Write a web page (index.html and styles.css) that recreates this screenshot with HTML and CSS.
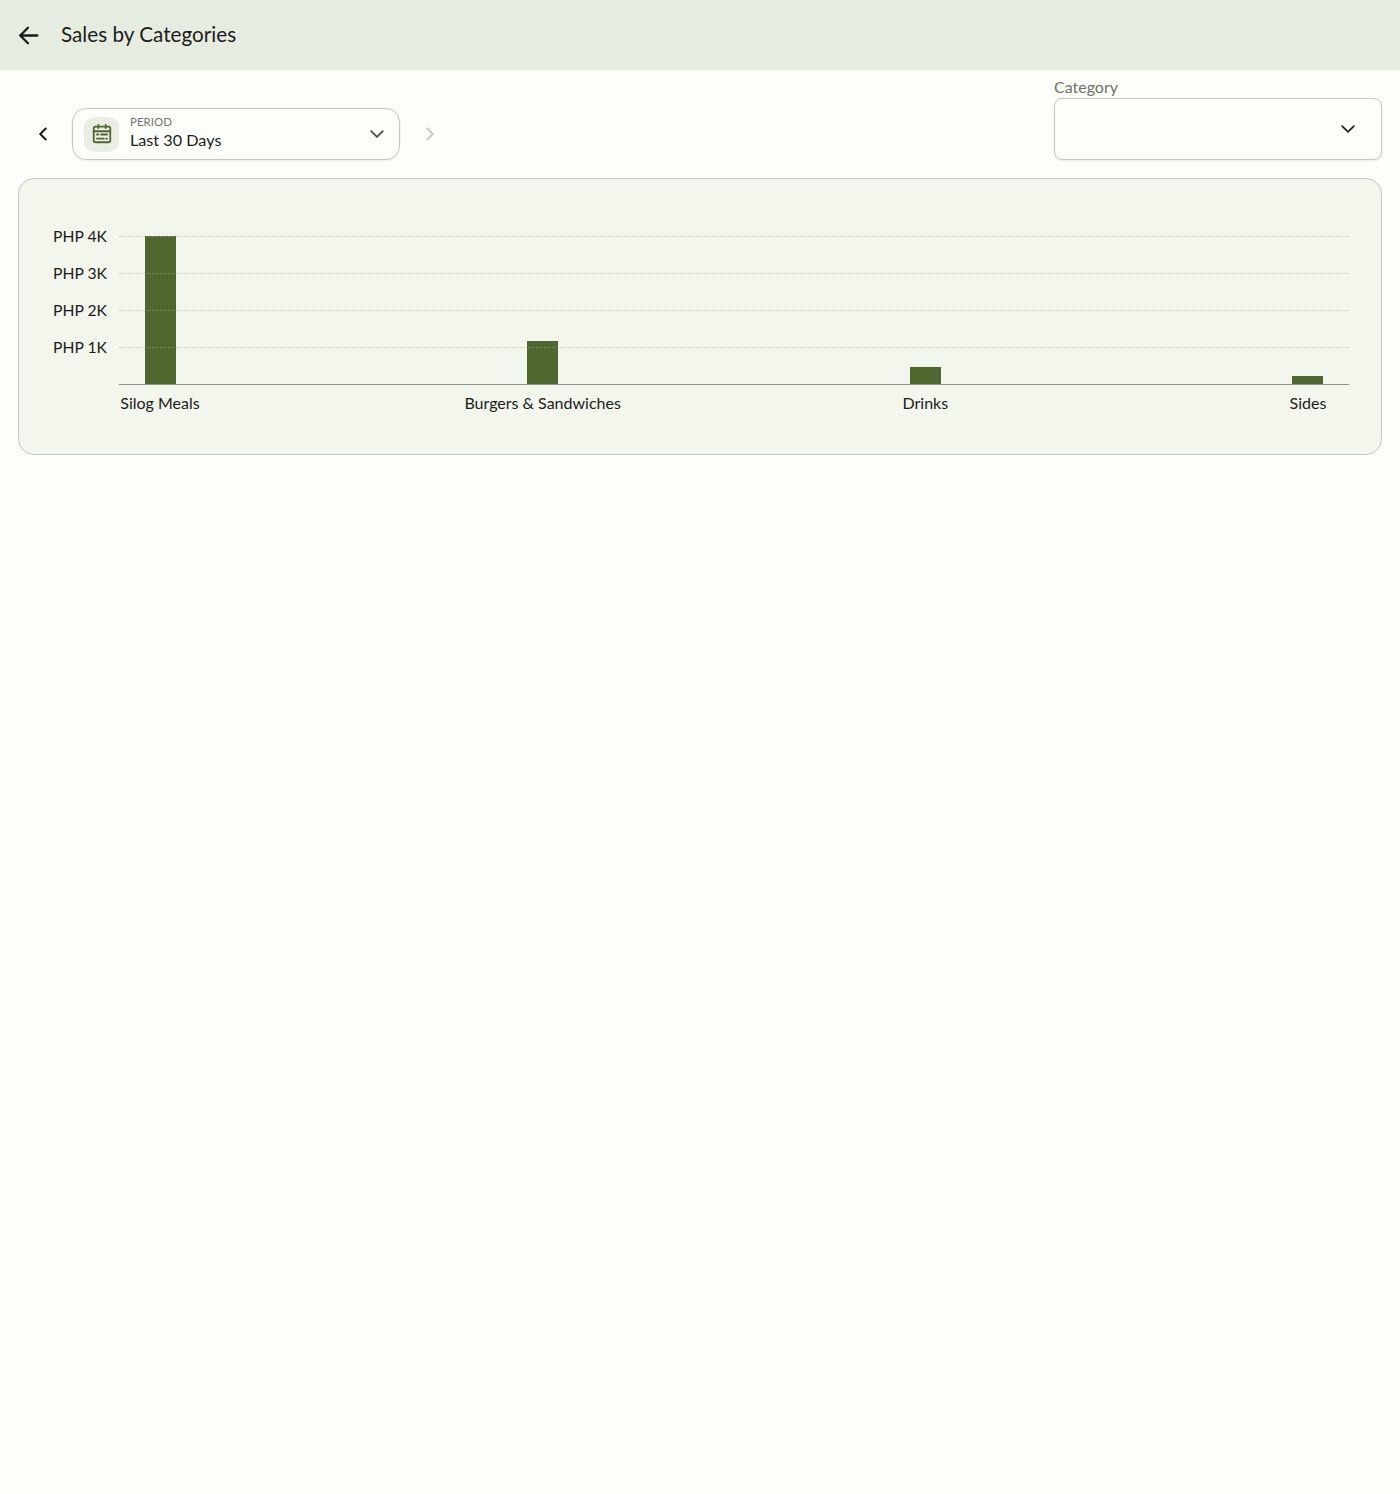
FILE: index.html
```html
<!DOCTYPE html>
<html lang="en">
<head>
    <meta charset="UTF-8">
    <meta name="viewport" content="width=device-width, initial-scale=1.0">
    <title>Sales by Categories</title>
    <link rel="stylesheet" href="styles.css">
</head>
<body>
    <header class="app-bar">
        <svg class="back-icon" viewBox="0 0 24 24"><path d="M20.500 12H4.500M11.500 4.500L4 12l7.500 7.500"/></svg>
        <h1>Sales by Categories</h1>
    </header>

    <div class="controls">
        <div class="period-group">
            <svg class="step-icon" viewBox="0 0 24 24"><path d="M15 6l-6 6 6 6"/></svg>
            <div class="period-select">
                <div class="period-icon">
                    <svg viewBox="0 0 24 24">
                        <rect x="3" y="4" width="18" height="17" rx="2"/>
                        <path d="M3 9h18M8 2v3.500M16 2v3.500M6.500 12.500h1.500M11 12.500h6.500M6.500 17h7.500M16.500 17h1"/>
                    </svg>
                </div>
                <div class="period-text">
                    <span class="period-label">PERIOD</span>
                    <span class="period-value">Last 30 Days</span>
                </div>
                <svg class="chevron muted" viewBox="0 0 24 24"><path d="M5 8.500l7 7 7-7"/></svg>
            </div>
            <svg class="step-icon disabled" viewBox="0 0 24 24"><path d="M9 6l6 6-6 6"/></svg>
        </div>
        <div class="category-field">
            <label>Category</label>
            <div class="category-select">
                <svg class="chevron" viewBox="0 0 24 24"><path d="M5 8.500l7 7 7-7"/></svg>
            </div>
        </div>
    </div>

    <section class="chart-card">
        <div class="chart">
            <div class="y-labels">
                <span>PHP 4K</span>
                <span>PHP 3K</span>
                <span>PHP 2K</span>
                <span>PHP 1K</span>
            </div>
            <div class="plot">
                <div class="bars">
                    <div class="bar-slot"><div class="bar" style="height: 148px"></div></div>
                    <div class="bar-slot"><div class="bar" style="height: 43px"></div></div>
                    <div class="bar-slot"><div class="bar" style="height: 17px"></div></div>
                    <div class="bar-slot"><div class="bar" style="height: 8px"></div></div>
                </div>
                <div class="grid-lines">
                    <div class="grid-line"></div>
                    <div class="grid-line"></div>
                    <div class="grid-line"></div>
                    <div class="grid-line"></div>
                </div>
            </div>
            <div class="x-labels">
                <span>Silog Meals</span>
                <span>Burgers &amp; Sandwiches</span>
                <span>Drinks</span>
                <span>Sides</span>
            </div>
        </div>
    </section>
</body>
</html>
```

FILE: styles.css
```css
body {
    font-family: "Lato", "Open Sans", sans-serif;
    margin: 0;
    min-height: 1494px;
    background-color: #fdfef9;
    color: #1c1d1a;
}
svg {
    fill: none;
    stroke: currentColor;
    stroke-linecap: round;
    stroke-linejoin: round;
    display: block;
}

.app-bar {
    height: 70px;
    display: flex;
    align-items: center;
    padding-left: 16px;
    background-color: #e6ecdf;
}
.app-bar h1 {
    margin: 0 0 2px 20px;
    font-size: 20.7px;
    font-weight: 400;
}
.back-icon {
    width: 25px;
    height: 25px;
    stroke-width: 2.2;
}

.controls {
    display: flex;
    justify-content: space-between;
    align-items: flex-end;
    padding: 8px 18px 0;
}
.period-group {
    display: flex;
    align-items: center;
}
.step-icon {
    width: 22px;
    height: 22px;
    margin: 0 18px 0 14px;
    stroke-width: 2.2;
}
.step-icon.disabled {
    margin: 0 0 0 19px;
    color: #c8cac3;
}
.period-select {
    width: 328px;
    height: 52px;
    box-sizing: border-box;
    display: flex;
    align-items: center;
    padding: 0 12px 0 11px;
    border: 1px solid #c5c7bf;
    border-radius: 14px;
    box-shadow: 0 1px 2px rgba(0, 0, 0, 0.08);
}
.period-icon {
    width: 35px;
    height: 35px;
    display: flex;
    align-items: center;
    justify-content: center;
    background-color: #e9ede4;
    border-radius: 10px;
    color: #4f672e;
}
.period-icon svg {
    width: 22px;
    height: 22px;
    stroke-width: 2;
}
.period-text {
    flex: 1;
    display: flex;
    flex-direction: column;
    margin-left: 11px;
    padding-bottom: 4px;
}
.period-label {
    font-size: 11.5px;
    line-height: 16px;
    color: #74766f;
}
.period-value {
    font-size: 16.2px;
    line-height: 20px;
}
.chevron {
    width: 20px;
    height: 20px;
    stroke-width: 2;
}
.chevron.muted {
    color: #44463f;
}

.category-field {
    width: 328px;
}
.category-field label {
    display: block;
    font-size: 16px;
    line-height: 18px;
    margin-bottom: 2px;
    color: #6f716a;
}
.category-select {
    height: 62px;
    box-sizing: border-box;
    display: flex;
    align-items: center;
    justify-content: flex-end;
    padding: 0 23px 0 0;
    border: 1px solid #c5c7bf;
    border-radius: 8px;
    box-shadow: 0 1px 2px rgba(0, 0, 0, 0.08);
}

.chart-card {
    height: 277px;
    box-sizing: border-box;
    margin: 18px 18px 0;
    padding-top: 57px;
    background-color: #f2f6ec;
    border: 1px solid #c5c8bf;
    border-radius: 16px;
}
.chart {
    display: grid;
    grid-template-columns: 100px 1230px;
}
.y-labels {
    display: flex;
    flex-direction: column;
    align-items: flex-end;
    padding-right: 12px;
    margin: -18px 0 0 -12px;
    font-size: 15.7px;
}
.y-labels span {
    height: 37px;
    line-height: 37px;
}
.plot {
    position: relative;
    height: 148px;
    border-bottom: 1px solid #8d9087;
}
.bars {
    height: 100%;
    display: flex;
    justify-content: space-between;
}
.bar-slot {
    width: 82px;
    display: flex;
    align-items: flex-end;
    justify-content: center;
}
.bar {
    width: 31px;
    background-color: #4f672e;
}
.grid-lines {
    position: absolute;
    inset: 0;
}
.grid-line {
    height: 37px;
    box-sizing: border-box;
    border-top: 1px dotted rgba(170, 175, 155, 0.55);
}
.x-labels {
    grid-column: 2;
    display: flex;
    justify-content: space-between;
    margin-top: 8px;
    font-size: 16px;
    line-height: 20px;
}
.x-labels span {
    width: 82px;
    display: flex;
    justify-content: center;
    white-space: nowrap;
}
```
